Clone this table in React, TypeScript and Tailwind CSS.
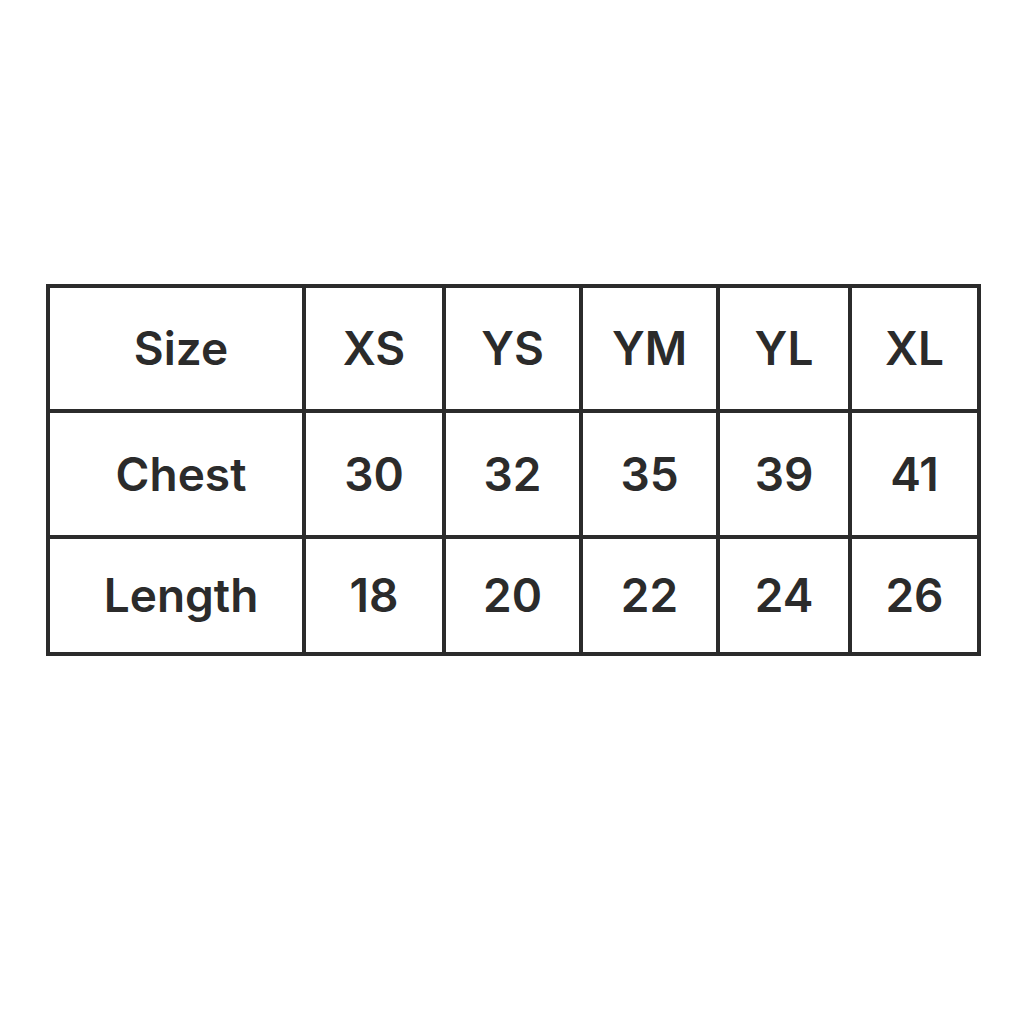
const headers = ['Size', 'XS', 'YS', 'YM', 'YL', 'XL'];
const rows = [
  ['Chest', '30', '32', '35', '39', '41'],
  ['Length', '18', '20', '22', '24', '26'],
];

export default function App() {
  return (
    <div className="min-h-screen bg-white pt-[284px] pl-[46px]" style={{ fontFamily: 'Inter, "Liberation Sans", sans-serif' }}>
      <div className="inline-grid grid-cols-[252px_136px_133px_133px_128px_125px] grid-rows-[121px_122px_113px] gap-[4px] bg-[#2b2b2b] p-[4px] text-[46px] font-semibold text-[#2b2b2b]">
        {[headers, ...rows].map((row, r) =>
          row.map((cell, c) => (
            <div
              key={`${r}-${c}`}
              className={`flex items-center justify-center bg-white ${c === 0 ? 'pl-[10px]' : ''}`}
            >
              {cell}
            </div>
          ))
        )}
      </div>
    </div>
  );
}
